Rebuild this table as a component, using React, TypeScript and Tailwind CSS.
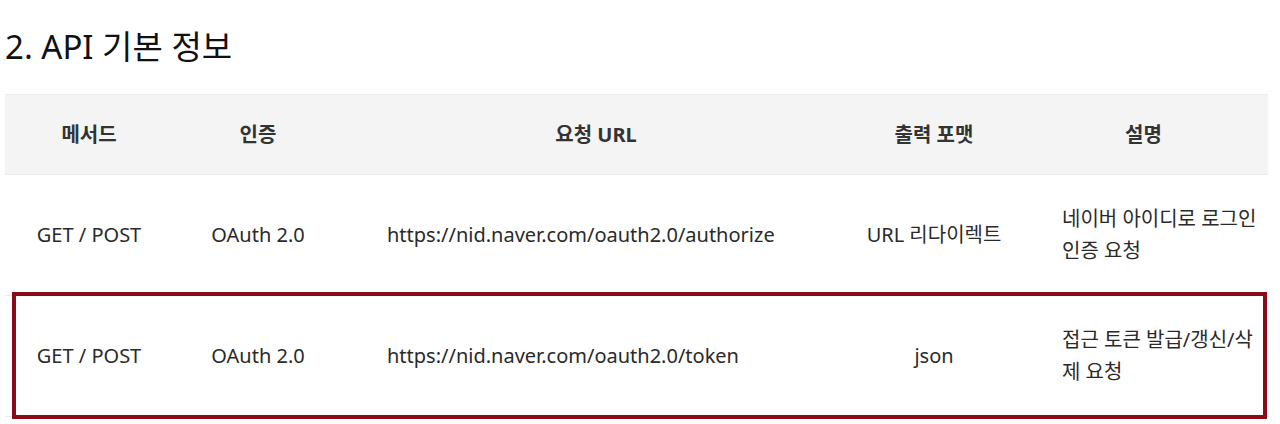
const font = "font-['Noto_Sans','Noto_Sans_CJK_KR',sans-serif]";

const rows = [
  {
    method: "GET / POST",
    auth: "OAuth 2.0",
    url: "https://nid.naver.com/oauth2.0/authorize",
    format: "URL 리다이렉트",
    desc: "네이버 아이디로 로그인 인증 요청",
  },
  {
    method: "GET / POST",
    auth: "OAuth 2.0",
    url: "https://nid.naver.com/oauth2.0/token",
    format: "json",
    desc: "접근 토큰 발급/갱신/삭제 요청",
  },
];

export default function App() {
  return (
    <div className={`relative h-[424px] w-[1280px] overflow-hidden bg-white ${font}`}>
      <h2 className="pl-[5px] pt-[24px] text-[33px] leading-[46px] font-normal text-[#111]">
        2. API 기본 정보
      </h2>
      <table className="mt-[24px] ml-[5px] w-[1263px] table-fixed border-collapse text-[#333]">
        <colgroup>
          <col className="w-[168px]" />
          <col className="w-[170px]" />
          <col className="w-[506px]" />
          <col className="w-[170px]" />
          <col className="w-[249px]" />
        </colgroup>
        <thead>
          <tr className="h-[80px] border-t border-b border-[#ececec] bg-[#f4f4f4] text-[20px] font-semibold">
            <th className="text-center">메서드</th>
            <th className="text-center">인증</th>
            <th className="text-center">요청 URL</th>
            <th className="text-center">출력 포맷</th>
            <th className="text-center">설명</th>
          </tr>
        </thead>
        <tbody className="text-[20px] leading-[32px] text-[#2a2a2a]">
          {rows.map((r) => (
            <tr key={r.url} className="h-[121px] border-b border-[#eeeeee]">
              <td className="text-center">{r.method}</td>
              <td className="text-center">{r.auth}</td>
              <td className="pl-[44px] text-left">{r.url}</td>
              <td className="text-center">{r.format}</td>
              <td className="pl-[43px] pr-[6px] text-left">{r.desc}</td>
            </tr>
          ))}
        </tbody>
      </table>
      {/* annotation box around the token row */}
      <div className="pointer-events-none absolute left-[12px] top-[292px] h-[127px] w-[1255px] border-4 border-[#8b0a1a]" />
    </div>
  );
}
